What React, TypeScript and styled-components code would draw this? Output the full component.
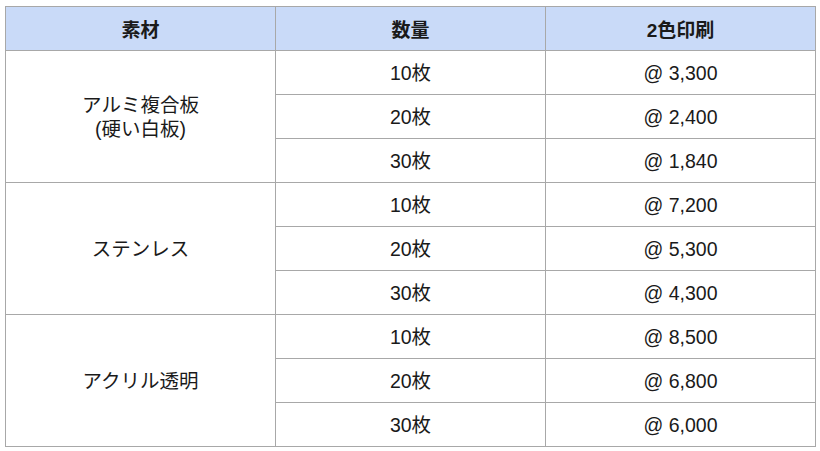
import React from "react";
import styled, { createGlobalStyle } from "styled-components";

const GlobalStyle = createGlobalStyle`
  html, body {
    margin: 0;
    padding: 0;
    background: #ffffff;
  }
  body {
    font-family: "Liberation Sans", Arial, "Noto Sans CJK JP", sans-serif;
    color: #1a1a1a;
  }
`;

const Wrap = styled.div`
  padding: 6px 4px 0 5px;
`;

const Table = styled.table`
  width: 811px;
  border-collapse: collapse;
  table-layout: fixed;
  font-size: 19.5px;
`;

const Head = styled.th`
  background: #c9daf8;
  border: 1px solid #a8a8a8;
  height: 43px;
  padding: 0;
  font-weight: bold;
  font-size: 19px;
  text-align: center;
  vertical-align: middle;
`;

const Cell = styled.td`
  border: 1px solid #a8a8a8;
  height: 43px;
  padding: 0;
  text-align: center;
  vertical-align: middle;
  line-height: 24px;
`;

type Group = {
  material: React.ReactNode;
  rows: { qty: string; price: string }[];
};

const groups: Group[] = [
  {
    material: (
      <>
        アルミ複合板
        <br />
        (硬い白板)
      </>
    ),
    rows: [
      { qty: "10枚", price: "@ 3,300" },
      { qty: "20枚", price: "@ 2,400" },
      { qty: "30枚", price: "@ 1,840" },
    ],
  },
  {
    material: "ステンレス",
    rows: [
      { qty: "10枚", price: "@ 7,200" },
      { qty: "20枚", price: "@ 5,300" },
      { qty: "30枚", price: "@ 4,300" },
    ],
  },
  {
    material: "アクリル透明",
    rows: [
      { qty: "10枚", price: "@ 8,500" },
      { qty: "20枚", price: "@ 6,800" },
      { qty: "30枚", price: "@ 6,000" },
    ],
  },
];

export default function App() {
  return (
    <Wrap>
      <GlobalStyle />
      <Table>
        <thead>
          <tr>
            <Head>素材</Head>
            <Head>数量</Head>
            <Head>2色印刷</Head>
          </tr>
        </thead>
        <tbody>
          {groups.map((g, gi) =>
            g.rows.map((r, ri) => (
              <tr key={`${gi}-${ri}`}>
                {ri === 0 && <Cell rowSpan={g.rows.length}>{g.material}</Cell>}
                <Cell>{r.qty}</Cell>
                <Cell>{r.price}</Cell>
              </tr>
            ))
          )}
        </tbody>
      </Table>
    </Wrap>
  );
}
